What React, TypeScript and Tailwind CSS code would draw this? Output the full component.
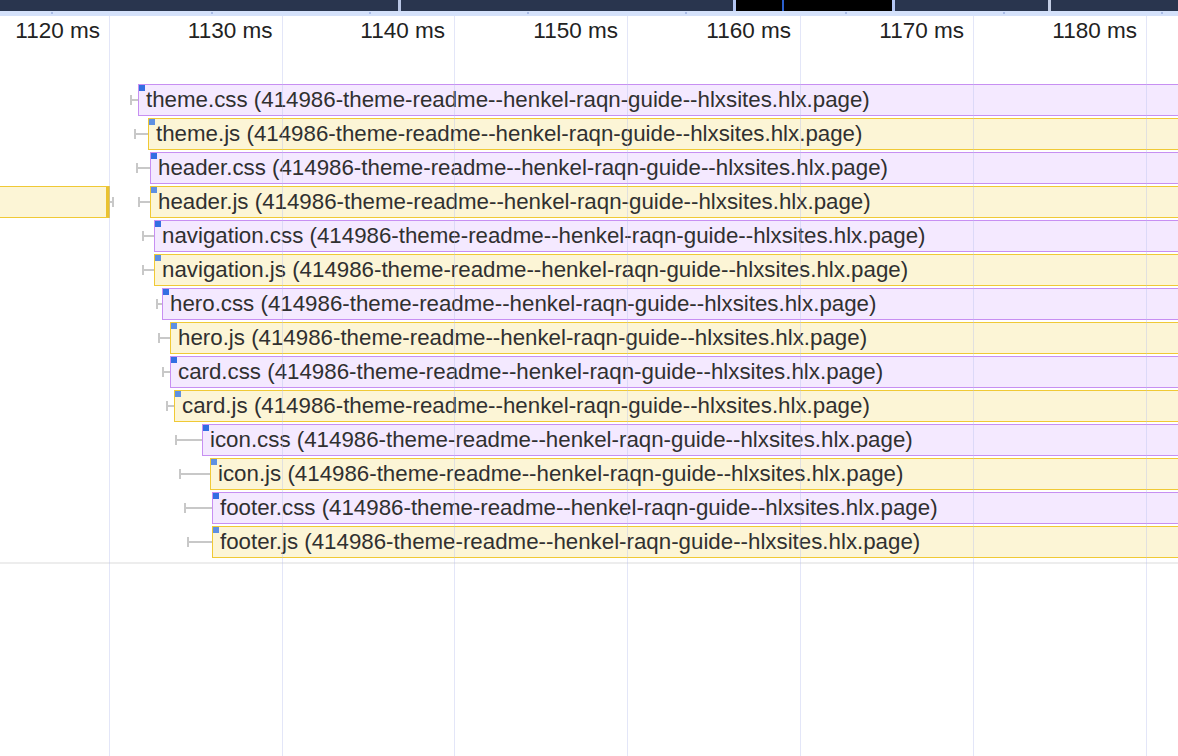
import React from "react";

type Kind = "css" | "js";

type Row = { name: string; kind: Kind; whisker: number; left: number; earlier?: boolean };

const HOST = "(414986-theme-readme--henkel-raqn-guide--hlxsites.hlx.page)";

const ROWS: Row[] = [
  { name: "theme.css", kind: "css", whisker: 130, left: 138 },
  { name: "theme.js", kind: "js", whisker: 134, left: 148 },
  { name: "header.css", kind: "css", whisker: 136, left: 150 },
  { name: "header.js", kind: "js", whisker: 138, left: 150, earlier: true },
  { name: "navigation.css", kind: "css", whisker: 142, left: 154 },
  { name: "navigation.js", kind: "js", whisker: 142, left: 154 },
  { name: "hero.css", kind: "css", whisker: 156, left: 162 },
  { name: "hero.js", kind: "js", whisker: 158, left: 170 },
  { name: "card.css", kind: "css", whisker: 162, left: 170 },
  { name: "card.js", kind: "js", whisker: 166, left: 174 },
  { name: "icon.css", kind: "css", whisker: 175, left: 202 },
  { name: "icon.js", kind: "js", whisker: 179, left: 210 },
  { name: "footer.css", kind: "css", whisker: 184, left: 212 },
  { name: "footer.js", kind: "js", whisker: 187, left: 212 },
];

const LABELS = ["1120 ms", "1130 ms", "1140 ms", "1150 ms", "1160 ms", "1170 ms", "1180 ms"];
const GRID = [109, 281.5, 454, 627, 800, 973, 1146];
const OVERVIEW_TICKS = [51, 211, 369, 527, 685, 845, 1003, 1161];

function Whisker({ from, to }: { from: number; to: number }) {
  return (
    <div className="flex h-full shrink-0 items-center" style={{ marginLeft: from, width: to - from }}>
      <div className="h-[10px] w-[2px] bg-[#c8c8c8]" />
      <div className="h-[2px] flex-1 bg-[#c8c8c8]" />
    </div>
  );
}

function Bar({ row }: { row: Row }) {
  const css = row.kind === "css";
  return (
    <div
      className={`relative flex h-[32px] min-w-0 flex-1 items-center overflow-hidden whitespace-nowrap border border-r-0 pl-[7px] text-[22.3px] text-[#303030] ${
        css ? "border-[#c78ff2] bg-[#f4e9ff]" : "border-[#f0c935] bg-[#fcf5d6]"
      }`}
    >
      <span
        className={`absolute left-[-1px] top-[-1px] h-[7px] w-[7px] ${css ? "bg-[#336ee2]" : "bg-[#5e90e2]"}`}
      />
      {row.name} {HOST}
    </div>
  );
}

function TimelineRow({ row }: { row: Row }) {
  if (row.earlier) {
    // header.js also has an earlier request ending just before the 1120 ms line
    return (
      <div className="flex h-[34px] items-start">
        <div className="h-[32px] w-[110px] shrink-0 border-y border-r-[4px] border-[#f0c935] border-r-[#eac230] bg-[#fcf5d6]" />
        <div className="flex h-[32px] w-[4px] shrink-0 items-center">
          <div className="h-[2px] flex-1 bg-[#c8c8c8]" />
          <div className="h-[10px] w-[2px] bg-[#c8c8c8]" />
        </div>
        <div className="flex h-[32px] shrink-0">
          <Whisker from={row.whisker - 114} to={row.left - 114} />
        </div>
        <Bar row={row} />
      </div>
    );
  }
  return (
    <div className="flex h-[34px] items-start">
      <div className="flex h-[32px] shrink-0">
        <Whisker from={row.whisker} to={row.left} />
      </div>
      <Bar row={row} />
    </div>
  );
}

export default function App() {
  return (
    <div className="relative h-[756px] w-[1178px] overflow-hidden bg-white font-['Liberation_Sans',Arial,sans-serif]">
      {/* overview strip */}
      <div className="flex h-[11px]">
        <div className="w-[398px] bg-[#29354e]" />
        <div className="w-[3px] bg-[#b9c6e4]" />
        <div className="w-[332px] bg-[#29354e]" />
        <div className="w-[3px] bg-[#b4c6f2]" />
        <div className="relative w-[156px] bg-black">
          <div className="absolute left-[46px] top-0 h-full w-[2px] bg-[#2a5fcc]" />
        </div>
        <div className="w-[3px] bg-[#b4c6f2]" />
        <div className="w-[153px] bg-[#29354e]" />
        <div className="w-[3px] bg-[#c3cde3]" />
        <div className="flex-1 bg-[#29354e]" />
      </div>
      <div className="relative h-[5px] bg-[#d4e1fa]">
        {OVERVIEW_TICKS.map((x) => (
          <div key={x} className="absolute top-[1px] h-[2px] w-[2px] bg-[#a9bbe6]" style={{ left: x }} />
        ))}
      </div>

      {/* time ruler */}
      <div className="flex h-[30px] items-center text-[22.5px] text-[#222]">
        {LABELS.map((label, i) => (
          <div
            key={label}
            className="shrink-0 pr-[9px] text-right"
            style={{ width: i === 0 ? GRID[0] : GRID[i] - GRID[i - 1] }}
          >
            {label}
          </div>
        ))}
      </div>

      <div className="mt-[38px] flex flex-col">
        {ROWS.map((row) => (
          <TimelineRow key={row.name} row={row} />
        ))}
      </div>
      <div className="mt-[2px] h-[2px] bg-[#ededed]" />

      {/* grid lines over everything */}
      <div className="pointer-events-none absolute inset-x-0 bottom-0 top-[16px]">
        {GRID.map((x) => (
          <div key={x} className="absolute inset-y-0 w-px bg-[#b9c0ee]/40" style={{ left: Math.round(x) }} />
        ))}
      </div>
    </div>
  );
}
